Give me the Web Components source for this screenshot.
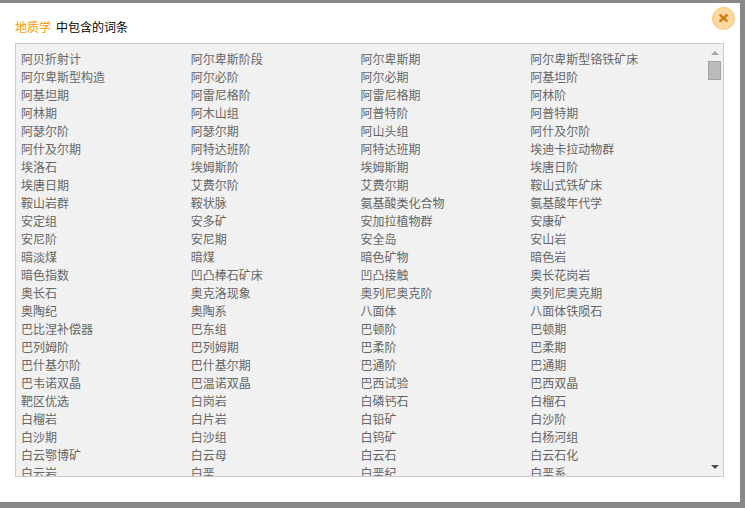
<!DOCTYPE html>
<html lang="zh-CN">
<head>
<meta charset="utf-8">
<title>地质学</title>
<style>
html,body{margin:0;padding:0;height:100%;overflow:hidden;background:#888;}
body{font:12px/18px "Noto Sans CJK SC","Liberation Sans",sans-serif;}
</style>
</head>
<body>
<word-dialog>
  <span slot="subject">地质学</span>
  <span slot="caption">中包含的词条</span>
  <term-list id="terms"></term-list>
</word-dialog>
<script>
class CloseButton extends HTMLElement{
  constructor(){super();
    this.attachShadow({mode:'open'}).innerHTML=`<style>
      :host{display:block;width:23px;height:23px;cursor:pointer}
      svg{display:block}
    </style>
    <svg width="23" height="23" viewBox="0 0 23 23" role="img" aria-label="关闭">
      <circle cx="11.5" cy="11.5" r="11" fill="#fdd8a2" stroke="#fcc374" stroke-width="1"/>
      <path d="M7.6 7.6 15.4 14.6M15.4 7.6 7.6 14.6" stroke="#d07a10" stroke-width="2.4" fill="none"/>
    </svg>`;
  }
}
customElements.define('close-button',CloseButton);

class ScrollRail extends HTMLElement{
  constructor(){super();
    this.attachShadow({mode:'open'}).innerHTML=`<style>
      :host{display:flex;flex-direction:column;align-items:center;width:15px;flex:none;padding:7px 1px 7px 0;box-sizing:content-box}
      .up,.down{width:0;height:0;border-left:4px solid transparent;border-right:4px solid transparent;flex:none}
      .up{border-bottom:4px solid #a3a3a3;margin-bottom:6px}
      .down{border-top:4px solid #505050;margin-top:auto}
      .thumb{width:13px;height:19px;box-sizing:border-box;background:#bbb;border:1px solid #a3a3a3;flex:none}
    </style>
    <div class="up"></div><div class="thumb"></div><div class="down"></div>`;
  }
}
customElements.define('scroll-rail',ScrollRail);

class TermItem extends HTMLElement{
  constructor(){super();
    this.attachShadow({mode:'open'}).innerHTML=`<style>
      :host{display:block;height:18px;line-height:18px;white-space:nowrap;color:#666;font-size:12px}
    </style><slot></slot>`;
  }
}
customElements.define('term-item',TermItem);

class TermList extends HTMLElement{
  constructor(){super();
    this.attachShadow({mode:'open'}).innerHTML=`<style>
      :host{display:grid;grid-template-columns:repeat(4,169.75px);grid-auto-rows:18px;align-content:start;
        flex:1;min-width:0;overflow:hidden;padding:6px 0 0 5px}
    </style><slot></slot>`;
  }
}
customElements.define('term-list',TermList);

class WordDialog extends HTMLElement{
  constructor(){super();
    this.attachShadow({mode:'open'}).innerHTML=`<style>
      :host{display:flex;flex-direction:column;position:relative;box-sizing:border-box;width:740px;height:499px;margin-top:3px;
        background:#fff;padding:0 16px 25px 15px}
      header{flex:none;height:40px;display:flex;align-items:center;gap:5px;font-size:12px;color:#000;padding-top:7px;box-sizing:border-box}
      ::slotted([slot=subject]){color:#f90}
      .box{flex:1;min-height:0;display:flex;border:1px solid #ccc;background:#f1f1f1;}
      close-button{position:absolute;top:4px;right:5px}
    </style>
    <header><slot name="subject"></slot><slot name="caption"></slot></header>
    <div class="box"><slot></slot><scroll-rail></scroll-rail></div>
    <close-button></close-button>`;
  }
}
customElements.define('word-dialog',WordDialog);

const words=`阿贝折射计 阿尔卑斯阶段 阿尔卑斯期 阿尔卑斯型铬铁矿床
阿尔卑斯型构造 阿尔必阶 阿尔必期 阿基坦阶
阿基坦期 阿雷尼格阶 阿雷尼格期 阿林阶
阿林期 阿木山组 阿普特阶 阿普特期
阿瑟尔阶 阿瑟尔期 阿山头组 阿什及尔阶
阿什及尔期 阿特达班阶 阿特达班期 埃迪卡拉动物群
埃洛石 埃姆斯阶 埃姆斯期 埃唐日阶
埃唐日期 艾费尔阶 艾费尔期 鞍山式铁矿床
鞍山岩群 鞍状脉 氨基酸类化合物 氨基酸年代学
安定组 安多矿 安加拉植物群 安康矿
安尼阶 安尼期 安全岛 安山岩
暗淡煤 暗煤 暗色矿物 暗色岩
暗色指数 凹凸棒石矿床 凹凸接触 奥长花岗岩
奥长石 奥克洛现象 奥列尼奥克阶 奥列尼奥克期
奥陶纪 奥陶系 八面体 八面体铁陨石
巴比涅补偿器 巴东组 巴顿阶 巴顿期
巴列姆阶 巴列姆期 巴柔阶 巴柔期
巴什基尔阶 巴什基尔期 巴通阶 巴通期
巴韦诺双晶 巴温诺双晶 巴西试验 巴西双晶
靶区优选 白岗岩 白磷钙石 白榴石
白榴岩 白片岩 白铅矿 白沙阶
白沙期 白沙组 白钨矿 白杨河组
白云鄂博矿 白云母 白云石 白云石化
白云岩 白垩 白垩纪 白垩系`.split(/\s+/);
const list=document.getElementById('terms');
for(const w of words){const t=document.createElement('term-item');t.textContent=w;list.appendChild(t);}
</script>
</body>
</html>
